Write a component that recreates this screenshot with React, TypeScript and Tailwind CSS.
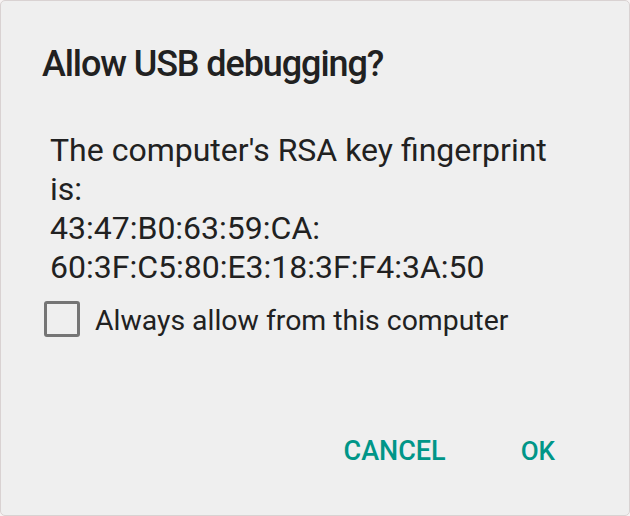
import React from "react";

export default function App() {
  return (
    <div className="w-[630px] h-[516px] bg-[#f7f3f3]" style={{ fontFamily: "Roboto, 'Noto Sans', sans-serif" }}>
      <div className="w-full h-full bg-[#efefef] border border-[#d9d2d2] rounded-[5px] flex flex-col">
        <h1 className="pl-[41px] pt-[41px] text-[36px] leading-[44px] font-medium text-[#212121] tracking-[-1.1px]">
          Allow USB debugging?
        </h1>
        <div className="pl-[49px] pt-[45px] w-[570px] text-[32px] leading-[39px] text-[#212121]">
          <p>The computer's RSA key fingerprint is:</p>
          <p>43:47:B0:63:59:CA:</p>
          <p>60:3F:C5:80:E3:18:3F:F4:3A:50</p>
        </div>
        <label className="flex items-start pl-[43px] mt-[14px] gap-[15px]">
          <span className="w-[36px] h-[36px] border-[3px] border-[#757575] rounded-[3px] shrink-0" />
          <span className="text-[28.4px] leading-[36px] mt-[2px] text-[#212121]">Always allow from this computer</span>
        </label>
        <div className="flex justify-end items-center mt-[97px] pr-[74px] gap-[75px]">
          <span className="text-[27px] font-medium text-[#009688] leading-[30px]">CANCEL</span>
          <span className="text-[26px] font-medium text-[#009688] leading-[30px]">OK</span>
        </div>
      </div>
    </div>
  );
}
